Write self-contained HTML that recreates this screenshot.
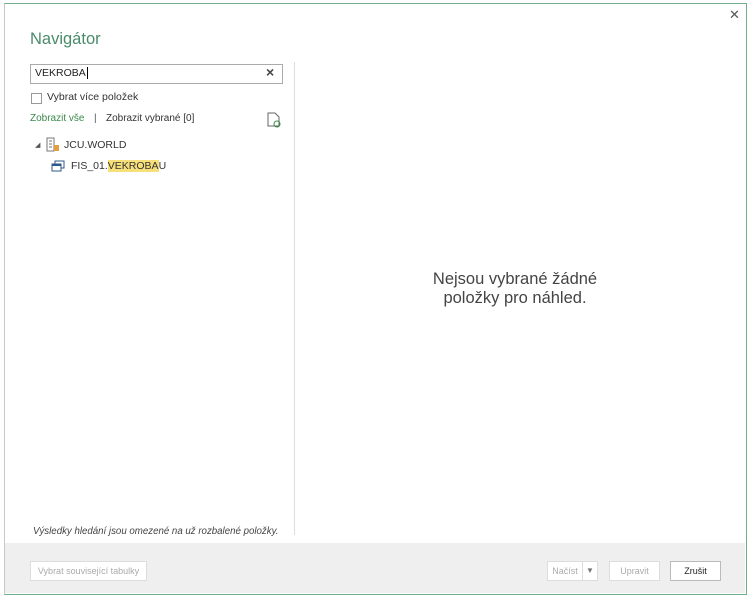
<!DOCTYPE html><html><head><style>
body{margin:0;width:751px;height:599px;background:#fff;font-family:"Liberation Sans",sans-serif;position:relative;overflow:hidden}
.a{position:absolute}
.win{left:4px;top:3px;width:741px;height:590px;border:1px solid #6fb08a;border-left-color:#c8c8c8;box-sizing:content-box}
.btn{position:absolute;height:18px;border:1px solid #ddd;background:#fff;font-size:9px;color:#aaa;line-height:18px;text-align:center}
</style></head><body>
<div class="a win"></div>
<div class="a" style="left:729px;top:7px;font-size:13px;color:#555">✕</div>
<div class="a" style="left:30px;top:30px;font-size:16.5px;color:#4a8b6a">Navigátor</div>
<div class="a" style="left:30px;top:64px;width:251px;height:18px;border:1px solid #aaa"></div>
<div class="a" style="left:35px;top:67px;font-size:10.5px;color:#222">VEKROBA<span style="border-left:1px solid #000;margin-left:1px"></span></div>
<div class="a" style="left:266px;top:64px;font-size:14px;color:#444;font-weight:bold">×</div>
<div class="a" style="left:31px;top:93px;width:9px;height:9px;border:1px solid #999"></div>
<div class="a" style="left:47px;top:91px;font-size:10.5px;color:#333">Vybrat více položek</div>
<div class="a" style="left:30px;top:113px;font-size:10px;color:#3a8a4a">Zobrazit vše</div>
<div class="a" style="left:94px;top:113px;font-size:10px;color:#555">|</div>
<div class="a" style="left:106px;top:113px;font-size:10px;color:#333">Zobrazit vybrané [0]</div>
<svg class="a" style="left:267px;top:112px" width="14" height="16"><path d="M1 1h7l4 4v9H1z" fill="#fff" stroke="#666"/><circle cx="10" cy="12" r="3" fill="none" stroke="#3a8a4a"/></svg>
<div class="a" style="left:35px;top:141px;font-size:7px;color:#555">◢</div>
<svg class="a" style="left:46px;top:137px" width="14" height="16"><rect x="1" y="1" width="7" height="13" fill="#fff" stroke="#777"/><path d="M3 4h3M3 7h3M3 10h3" stroke="#777"/><rect x="8" y="8" width="5" height="6" fill="#e0a040"/></svg>
<div class="a" style="left:64px;top:139px;font-size:10.5px;color:#333">JCU.WORLD</div>
<svg class="a" style="left:51px;top:160px" width="14" height="12"><rect x="4" y="1" width="9" height="7" fill="#fff" stroke="#2d5a8a"/><rect x="1" y="4" width="9" height="7" fill="#fff" stroke="#2d5a8a"/><rect x="1" y="4" width="9" height="2" fill="#2d5a8a"/></svg>
<div class="a" style="left:71px;top:160px;font-size:10.5px;color:#333">FIS_01.<span style="background:#f7e07a">VEKROBA</span>U</div>
<div class="a" style="left:294px;top:62px;width:1px;height:473px;background:#ddd"></div>
<div class="a" style="left:395px;top:270px;width:240px;text-align:center;font-size:16.5px;color:#444;line-height:19px">Nejsou vybrané žádné<br>položky pro náhled.</div>
<div class="a" style="left:33px;top:526px;font-size:9.7px;font-style:italic;color:#444">Výsledky hledání jsou omezené na už rozbalené položky.</div>
<div class="a" style="left:5px;top:543px;width:740px;height:50px;background:#efefef"></div>
<div class="btn" style="left:30px;top:561px;width:115px">Vybrat související tabulky</div>
<div class="btn" style="left:547px;top:561px;width:34px">Načíst</div>
<div class="btn" style="left:582px;top:561px;width:14px;font-size:8px;color:#777">▼</div>
<div class="btn" style="left:609px;top:561px;width:49px">Upravit</div>
<div class="btn" style="left:670px;top:561px;width:49px;color:#222;border-color:#bbb">Zrušit</div>
</body></html>
